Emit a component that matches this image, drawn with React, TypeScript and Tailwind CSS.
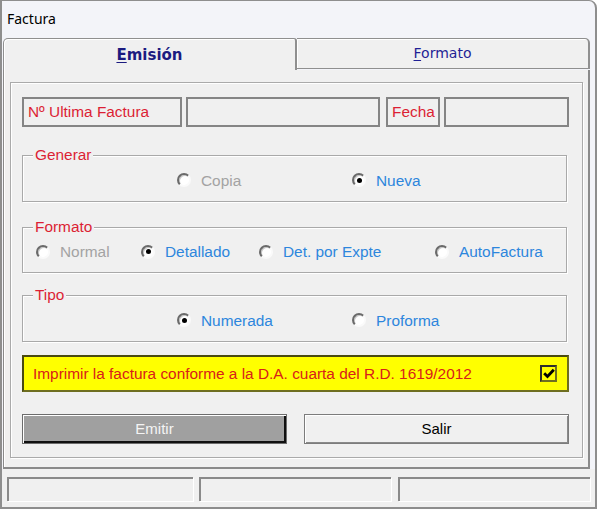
import React from 'react'

const RED = 'text-[#dc1f34]'
const BLUE = 'text-[#2d86dd]'
const GREY = 'text-[#a3a3a3]'

function Radio({ checked }: { checked?: boolean }) {
  return (
    <span className="relative flex h-[14px] w-[14px] shrink-0 items-center justify-center rounded-full border-2 border-t-[#6a6a6a] border-l-[#6a6a6a] border-r-[#fafafa] border-b-[#fafafa] bg-white shadow-[inset_1px_1px_0_#c8c8c8]">
      {checked && <span className="h-[5px] w-[5px] rounded-full bg-black" />}
    </span>
  )
}

function Option({
  label,
  checked,
  disabled,
  width,
}: {
  label: string
  checked?: boolean
  disabled?: boolean
  width: string
}) {
  return (
    <div className={`flex items-center gap-[10px] ${width}`}>
      <Radio checked={checked} />
      <span className={disabled ? GREY : BLUE}>{label}</span>
    </div>
  )
}

function Group({
  title,
  className,
  children,
}: {
  title: string
  className: string
  children: React.ReactNode
}) {
  return (
    <div
      className={`relative flex w-[545px] items-center border border-[#a9a9a9] pt-[4px] shadow-[1px_1px_0_#fff,inset_1px_1px_0_#fff] ${className}`}
    >
      <span className={`absolute -top-[11px] left-[10px] bg-[#f0f0f0] px-[2px] leading-[20px] ${RED}`}>
        {title}
      </span>
      {children}
    </div>
  )
}

function Box({ w, children }: { w: string; children?: React.ReactNode }) {
  return (
    <div className={`flex h-[30px] ${w} items-center border-2 border-[#858585] px-[4px] ${RED}`}>
      {children}
    </div>
  )
}

export default function App() {
  return (
    <div
      className="flex h-[509px] w-[597px] flex-col overflow-hidden rounded-tr-[8px] border-t border-r-2 border-b-2 border-l-2 border-[#8e8e8e] bg-[#f3f4f9] text-[15.4px] text-black"
      style={{ fontFamily: '"Liberation Sans", Arial, sans-serif' }}
    >
      {/* title */}
      <div
        className="flex h-[35px] shrink-0 items-center px-[5px] pb-[1px] text-[14px]"
        style={{ fontFamily: '"Noto Sans", "Open Sans", sans-serif' }}
      >
        Factura
      </div>

      {/* tabs */}
      <div
        className="mt-[2px] ml-[1px] flex h-[32px] shrink-0 items-start"
        style={{ fontFamily: '"DejaVu Sans", Verdana, sans-serif' }}
      >
        <div className="flex h-[32px] w-[294px] items-center justify-center rounded-tl-[5px] rounded-tr-[3px] border-t border-l border-r-2 border-[#8f8f8f] bg-[#f0f0f0] pt-[1px] text-[15px] font-bold text-[#1b1b80] shadow-[inset_1px_1px_0_#fff]">
          <span>
            <span className="underline underline-offset-2">E</span>misión
          </span>
        </div>
        <div className="flex h-[31px] w-[293px] items-center justify-center rounded-tr-[5px] border-t border-r-2 border-b border-[#8f8f8f] bg-[#f0f0f0] text-[14px] text-[#1f1f95] shadow-[inset_1px_1px_0_#fff]">
          <span>
            <span className="underline underline-offset-2">F</span>ormato
          </span>
        </div>
      </div>

      {/* panel */}
      <div className="ml-[1px] h-[399px] w-[587px] shrink-0 border-l border-r-2 border-b-2 border-[#8a8a8a] bg-[#f0f0f0] pt-[12px] pl-[6px] shadow-[inset_1px_0_0_#fff]">
        <div className="flex h-[376px] w-[573px] flex-col border border-[#aaaaaa] pt-[14px] pl-[11px] shadow-[1px_1px_0_#fff,inset_1px_1px_0_#fff]">
          <div className="flex h-[30px] w-[547px]">
            <Box w="w-[160px]">Nº Ultima Factura</Box>
            <div className="ml-[4px]">
              <Box w="w-[194px]" />
            </div>
            <div className="ml-[6px]">
              <Box w="w-[54px]">Fecha</Box>
            </div>
            <div className="ml-[4px]">
              <Box w="w-[125px]" />
            </div>
          </div>

          <Group title="Generar" className="mt-[28px] h-[47px] pl-[154px]">
            <Option label="Copia" disabled width="w-[175px]" />
            <Option label="Nueva" checked width="w-[150px]" />
          </Group>

          <Group title="Formato" className="mt-[25px] h-[46px] pl-[13px]">
            <Option label="Normal" disabled width="w-[105px]" />
            <Option label="Detallado" checked width="w-[118px]" />
            <Option label="Det. por Expte" width="w-[176px]" />
            <Option label="AutoFactura" width="w-[120px]" />
          </Group>

          <Group title="Tipo" className="mt-[22px] h-[47px] pl-[154px]">
            <Option label="Numerada" checked width="w-[175px]" />
            <Option label="Proforma" width="w-[150px]" />
          </Group>

          <div className="mt-[13px] flex h-[37px] w-[547px] items-center justify-between border-2 border-t-[#4a4a10] border-l-[#4a4a10] border-r-[#6e6e20] border-b-[#6e6e20] bg-[#ffff00] pr-[10px] pl-[9px] text-[#d8201a]">
            <span>Imprimir la factura conforme a la D.A. cuarta del R.D. 1619/2012</span>
            <span className="flex h-[17px] w-[17px] items-center justify-center border-2 border-t-[#2e2e2e] border-l-[#2e2e2e] border-r-[#707020] border-b-[#707020] bg-[#ffff00]">
              <svg width="12" height="11" viewBox="0 0 12 11">
                <path d="M1.2 5.2 L4.5 8.5 L10.8 1.8" fill="none" stroke="#000" strokeWidth="2.8" />
              </svg>
            </span>
          </div>

          <div className="mt-[22px] flex w-[547px] gap-[17px]">
            <button className="flex h-[30px] w-[265px] items-center justify-center border border-[#6c6c6c] bg-[#a0a0a0] text-[15px] text-[#f4f4f4] shadow-[inset_1px_1px_0_#fff,inset_-2px_-2px_0_#101010]">
              Emitir
            </button>
            <button className="flex h-[30px] w-[265px] items-center justify-center border border-[#7c7c7c] bg-[#f0f0f0] text-[15px] text-black shadow-[inset_1px_1px_0_#fff,inset_-1px_-1px_0_#8a8a8a]">
              Salir
            </button>
          </div>
        </div>
      </div>

      {/* status bar */}
      <div className="flex flex-1 items-start bg-[#f0f0f0] pt-[8px] pl-[5px]">
        <div className="h-[24px] w-[186px] border-t-2 border-l-2 border-[#8a8a8a] shadow-[1px_1px_0_#fff]" />
        <div className="ml-[6px] h-[24px] w-[192px] border-t-2 border-l-2 border-[#8a8a8a] shadow-[1px_1px_0_#fff]" />
        <div className="ml-[7px] h-[24px] w-[192px] border-t-2 border-l-2 border-[#8a8a8a] shadow-[1px_1px_0_#fff]" />
      </div>
    </div>
  )
}
